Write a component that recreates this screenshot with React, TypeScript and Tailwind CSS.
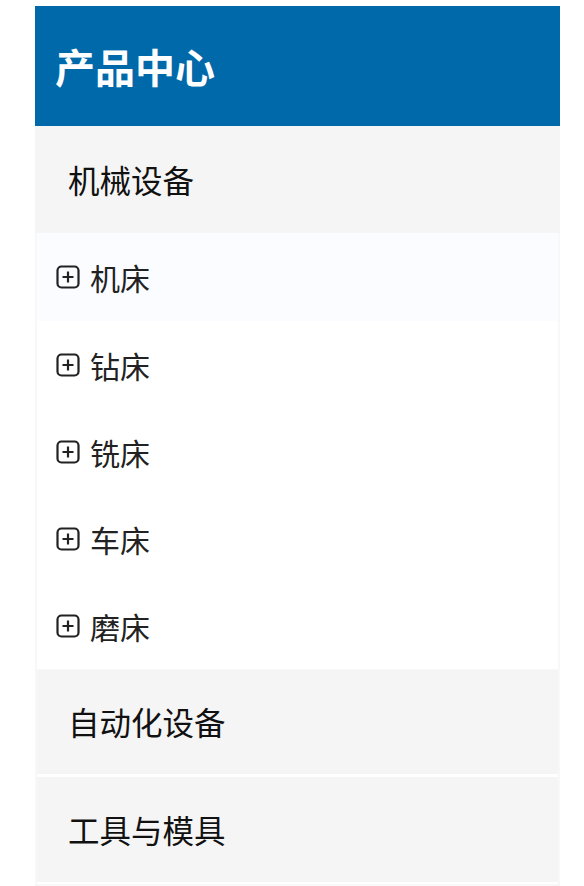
import React from 'react';

const subItems = ['机床', '钻床', '铣床', '车床', '磨床'];

function PlusBox() {
  return (
    <svg width="24" height="24" viewBox="0 0 24 24" fill="none" stroke="#222" strokeWidth="2.2" className="shrink-0">
      <rect x="1.5" y="1.5" width="21" height="21" rx="4" />
      <path d="M6.5 12h11M12 6.5v11" />
    </svg>
  );
}

export default function App() {
  const font = { fontFamily: '"Noto Sans CJK SC", "Noto Sans", sans-serif' };
  return (
    <div className="min-h-screen bg-white pt-[6px]" style={font}>
      <div className="ml-[35px] w-[525px] bg-[#f8f8f8]">
        <div className="h-[120px] bg-[#0069aa] flex items-center px-[20px]">
          <h2 className="text-[40px] font-bold text-white leading-none">产品中心</h2>
        </div>

        <div className="h-[107px] bg-[#f5f5f5] flex items-center pl-[33px]">
          <span className="text-[31.5px] text-[#111] leading-none">机械设备</span>
        </div>

        <div className="mx-[2px] bg-white">
          {subItems.map((name, i) => (
            <div
              key={name}
              className={`flex items-center gap-[10px] pl-[19px] ${i === 0 ? 'bg-[#fafcff] h-[88px]' : 'h-[87px]'}`}
            >
              <PlusBox />
              <span className="text-[30px] text-[#222] leading-none">{name}</span>
            </div>
          ))}
        </div>

        <div className="mx-[2px] pt-[1px]">
          <div className="h-[107px] bg-[#f5f5f5] flex items-center pl-[31px] border-b-[3px] border-white">
            <span className="text-[31.5px] text-[#111] leading-none">自动化设备</span>
          </div>
          <div className="h-[107px] bg-[#f5f5f5] flex items-center pl-[31px] border-b-[2px] border-white">
            <span className="text-[31.5px] text-[#111] leading-none">工具与模具</span>
          </div>
          <div className="h-[2px]" />
        </div>
      </div>
    </div>
  );
}
